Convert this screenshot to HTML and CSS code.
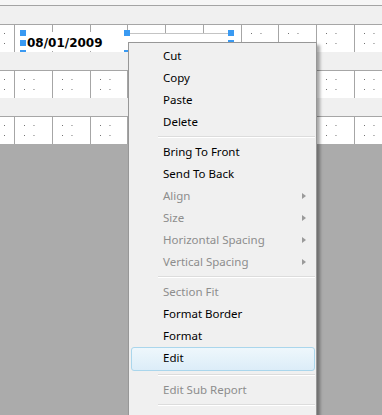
FILE: index.html
```html
<!DOCTYPE html>
<html lang="en">
<head>
  <meta charset="UTF-8">
  <title>Report Designer</title>
  <link rel="stylesheet" href="styles.css">
</head>
<body>

  <div class="designer">
    <div class="ruler"></div>
    <div class="band"></div>

    <div class="detail-row">
      <div class="cell first"></div>
      <div class="cell"></div><div class="cell"></div><div class="cell"></div><div class="cell"></div><div class="cell"></div>
      <div class="cell"></div><div class="cell"></div><div class="cell"></div><div class="cell"></div><div class="cell"></div>

      <div class="field date-field">08/01/2009</div>
      <div class="field next-field"></div>

      <span class="handle" style="left:20px;top:5px"></span>
      <span class="handle" style="left:20px;top:15px"></span>
      <span class="handle" style="left:20px;top:25px"></span>
      <span class="handle" style="left:124px;top:5px"></span>
      <span class="handle" style="left:124px;top:25px"></span>
      <span class="handle" style="left:228px;top:5px"></span>
      <span class="handle" style="left:228px;top:15px"></span>
    </div>

    <div class="band"></div>

    <div class="detail-row">
      <div class="cell first"></div>
      <div class="cell"></div><div class="cell"></div><div class="cell"></div><div class="cell"></div><div class="cell"></div>
      <div class="cell"></div><div class="cell"></div><div class="cell"></div><div class="cell"></div><div class="cell"></div>
    </div>

    <div class="band"></div>

    <div class="detail-row">
      <div class="cell first"></div>
      <div class="cell"></div><div class="cell"></div><div class="cell"></div><div class="cell"></div><div class="cell"></div>
      <div class="cell"></div><div class="cell"></div><div class="cell"></div><div class="cell"></div><div class="cell"></div>
    </div>
  </div>

  <ul class="context-menu">
    <li>Cut</li>
    <li>Copy</li>
    <li>Paste</li>
    <li>Delete</li>
    <li class="sep"></li>
    <li>Bring To Front</li>
    <li>Send To Back</li>
    <li class="disabled sub">Align</li>
    <li class="disabled sub">Size</li>
    <li class="disabled sub">Horizontal Spacing</li>
    <li class="disabled sub">Vertical Spacing</li>
    <li class="sep"></li>
    <li class="disabled">Section Fit</li>
    <li>Format Border</li>
    <li>Format</li>
    <li class="active">Edit</li>
    <li class="sep"></li>
    <li class="disabled">Edit Sub Report</li>
    <li class="sep"></li>
    <li>Add Drill Down</li>
  </ul>

</body>
</html>
```

FILE: styles.css
```css
body {
  margin: 0;
  width: 382px;
  height: 415px;
  overflow: hidden;
  position: relative;
  background-color: #ababab;
  font-family: 'Noto Sans', 'Open Sans', sans-serif;
}

.designer {
  overflow: hidden;
}

.ruler {
  height: 5px;
  background-color: #f6f6f6;
  border-bottom: 1px solid #a4a4a4;
}

.band {
  height: 18px;
  background-color: #f0f0f0;
}

.detail-row {
  position: relative;
  display: flex;
  height: 27px;
  border-top: 1px solid #a6a6a6;
  background-color: white;
  overflow: hidden;
}

/* each cell carries its own dot grid */
.cell {
  flex: 0 0 37.75px;
  box-sizing: border-box;
  border-right: 1px solid #a6a6a6;
  padding: 8px 9px 0 9px;
  background-image: conic-gradient(from 270deg at 1px 1px, #6e6e6e 90deg, transparent 0);
  background-size: 9.5px 10px;
  background-origin: content-box;
  background-clip: content-box;
}

.cell.first {
  flex-basis: 15px;
  padding-left: 4px;
}

.field {
  position: absolute;
  background-color: white;
}

.date-field {
  left: 23px;
  top: 7px;
  width: 104px;
  height: 19px;
  padding: 1px 0 0 4px;
  box-sizing: border-box;
  font-family: 'DejaVu Sans', sans-serif;
  font-weight: bold;
  font-size: 12px;
  line-height: 20px;
  color: #000;
}

.next-field {
  left: 127px;
  top: 8px;
  width: 104px;
  height: 19px;
  border-top: 1px solid #c4c4c4;
}

.handle {
  position: absolute;
  width: 6px;
  height: 6px;
  background-color: #3a9af2;
}

.context-menu {
  position: absolute;
  left: 128px;
  top: 42px;
  width: 189px;
  margin: 0;
  padding: 2px 1px 2px 2px;
  box-sizing: border-box;
  list-style: none;
  background-color: #f0f0f0;
  border: 1px solid #979797;
  box-shadow: 3px 3px 3px rgba(0,0,0,0.35);
  font-size: 11.5px;
  color: #000;
}

.context-menu li {
  position: relative;
  height: 22px;
  line-height: 22px;
  padding-left: 32px;
  white-space: nowrap;
}

.context-menu li.disabled {
  color: #8d8d8d;
}

.context-menu li.sub::after {
  content: "";
  position: absolute;
  right: 9px;
  top: 8px;
  border-left: 4px solid #9a9a9a;
  border-top: 3.5px solid transparent;
  border-bottom: 3.5px solid transparent;
}

.context-menu li.active {
  padding-left: 31px;
  line-height: 20px;
  border: 1px solid #aad6ec;
  border-radius: 3px;
  background: linear-gradient(#eef7fc, #dcedf8);
}

.context-menu li.sep {
  height: 8px;
  padding: 0;
}

.context-menu li.sep::after {
  content: "";
  position: absolute;
  left: 27px;
  right: 0;
  top: 3px;
  border-top: 1px solid #dcdcdc;
  border-bottom: 1px solid #ffffff;
}
```
